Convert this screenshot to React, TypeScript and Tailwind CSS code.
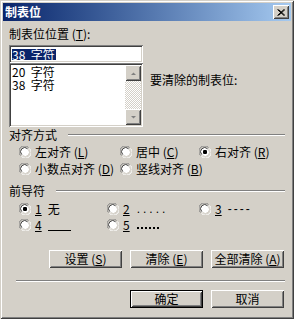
import React from "react";

const raised =
  "shadow-[inset_1px_1px_0_#ffffff,inset_-1px_-1px_0_#404040,inset_2px_2px_0_#d4d0c8,inset_-2px_-2px_0_#808080]";
const sunken =
  "shadow-[inset_1px_1px_0_#808080,inset_-1px_-1px_0_#ffffff,inset_2px_2px_0_#404040,inset_-2px_-2px_0_#d4d0c8]";

function Radio({ checked }: { checked?: boolean }) {
  return (
    <svg width="12" height="12" viewBox="0 0 12 12" className="shrink-0">
      <path d="M1.5 9.5 A5.5 5.5 0 0 1 9.5 1.5" stroke="#808080" strokeWidth="1" fill="none" />
      <path d="M2.5 10.5 A5.5 5.5 0 0 0 10.5 2.5" stroke="#ffffff" strokeWidth="1" fill="none" />
      <circle cx="6" cy="6" r="4.5" fill="#ffffff" />
      <path d="M2.8 8.6 A4 4 0 0 1 8.6 2.8" stroke="#404040" strokeWidth="1" fill="none" />
      <path d="M3.4 9.2 A4 4 0 0 0 9.2 3.4" stroke="#d4d0c8" strokeWidth="1" fill="none" />
      {checked && <rect x="4" y="4" width="4" height="4" rx="1.2" fill="#000" />}
    </svg>
  );
}

function RadioItem({ checked, children, w }: { checked?: boolean; children: React.ReactNode; w: string }) {
  return (
    <div className={`flex items-center h-[12px] ${w}`}>
      <Radio checked={checked} />
      <span className="ml-[4px] leading-[12px] whitespace-pre flex items-center">{children}</span>
    </div>
  );
}

function Btn({ children, def }: { children: React.ReactNode; def?: boolean }) {
  if (def) {
    return (
      <div className="w-[73px] h-[18px] border border-black">
        <div className={`w-full h-full flex items-center justify-center leading-[12px] whitespace-pre ${raised}`}>{children}</div>
      </div>
    );
  }
  return (
    <div className={`w-[73px] h-[18px] flex items-center justify-center leading-[12px] whitespace-pre ${raised}`}>{children}</div>
  );
}

function GroupHeader({ label }: { label: string }) {
  return (
    <div className="flex items-center h-[12px]">
      <span className="leading-[12px] whitespace-nowrap">{label}</span>
      <div className="flex-1 ml-[11px] border-t border-t-[#808080] border-b border-b-white" />
    </div>
  );
}

export default function App() {
  return (
    <div
      className="w-[294px] h-[319px] bg-[#d4d0c8] p-[3px] text-[12px] text-black font-['Noto_Sans_CJK_SC',sans-serif] shadow-[inset_1px_1px_0_#d4d0c8,inset_-1px_-1px_0_#404040,inset_2px_2px_0_#ffffff,inset_-2px_-2px_0_#808080] flex flex-col"
    >
      {/* Title bar */}
      <div className="h-[18px] flex items-center bg-gradient-to-r from-[#0a246a] to-[#a6caf0] pl-[2px] pr-[2px]">
        <span className="font-bold text-white leading-[12px]">制表位</span>
        <div className={`ml-auto w-[16px] h-[14px] bg-[#d4d0c8] flex items-center justify-center ${raised}`}>
          <svg width="8" height="7" viewBox="0 0 8 7">
            <path d="M0.5 0.5 L7 6.5 M1.5 0.5 L8 6.5 M7 0.5 L0.5 6.5 M8 0.5 L1.5 6.5" stroke="#000" strokeWidth="1" />
          </svg>
        </div>
      </div>

      <div className="flex flex-col px-[6px]">
        <div className="mt-[7px] h-[12px] leading-[12px] whitespace-pre">
          制表位位置 (<span className="underline">T</span>):
        </div>

        <div className="flex mt-[5px]">
          <div className="flex flex-col w-[134px]">
            <div className={`h-[18px] bg-white pl-[3px] flex items-center ${sunken}`}>
              <span className="bg-[#0a246a] text-white leading-[11px] h-[11px] pr-[1px] whitespace-pre">38  字符</span>
            </div>
            <div className={`h-[64px] bg-white p-[2px] flex ${sunken}`}>
              <div className="flex-1 flex flex-col pl-[1px] pt-[1px]">
                <div className="h-[12.5px] leading-[12px] whitespace-pre">20  字符</div>
                <div className="h-[12.5px] leading-[12px] whitespace-pre">38  字符</div>
              </div>
              <div className="w-[16px] flex flex-col bg-[repeating-conic-gradient(#d4d0c8_0%_25%,#ffffff_0%_50%)] bg-[length:2px_2px]">
                <div className={`h-[16px] bg-[#d4d0c8] flex items-center justify-center ${raised}`}>
                  <svg width="7" height="5" viewBox="0 0 7 5">
                    <path d="M1 4 L6 4 L3.5 1.5 Z" fill="#808080" />
                  </svg>
                </div>
                <div className="flex-1" />
                <div className={`h-[16px] bg-[#d4d0c8] flex items-center justify-center ${raised}`}>
                  <svg width="7" height="5" viewBox="0 0 7 5">
                    <path d="M1 1 L6 1 L3.5 3.5 Z" fill="#808080" />
                  </svg>
                </div>
              </div>
            </div>
          </div>
          <div className="ml-[7px] mt-[29px] h-[12px] leading-[12px] whitespace-nowrap">要清除的制表位:</div>
        </div>

        {/* Alignment */}
        <div className="mt-[2px]">
          <GroupHeader label="对齐方式" />
        </div>
        <div className="flex mt-[5px] ml-[10px]">
          <RadioItem w="w-[101px]">
            左对齐 (<span className="underline">L</span>)
          </RadioItem>
          <RadioItem w="w-[79px]">
            居中 (<span className="underline">C</span>)
          </RadioItem>
          <RadioItem checked w="">
            右对齐 (<span className="underline">R</span>)
          </RadioItem>
        </div>
        <div className="flex mt-[5px] ml-[10px]">
          <RadioItem w="w-[101px]">
            小数点对齐 (<span className="underline">D</span>)
          </RadioItem>
          <RadioItem w="">
            竖线对齐 (<span className="underline">B</span>)
          </RadioItem>
        </div>

        {/* Leader */}
        <div className="mt-[10px]">
          <GroupHeader label="前导符" />
        </div>
        <div className="flex mt-[6px] ml-[10px]">
          <RadioItem checked w="w-[88px]">
            <span className="underline">1</span>
            <span className="ml-[6px]">无</span>
          </RadioItem>
          <RadioItem w="w-[92px]">
            <span className="underline">2</span>
            <span className="ml-[7px] tracking-[3px] font-['Liberation_Sans',sans-serif]">.....</span>
          </RadioItem>
          <RadioItem w="">
            <span className="underline">3</span>
            <span className="ml-[6px] tracking-[2px] font-['Liberation_Sans',sans-serif]">----</span>
          </RadioItem>
        </div>
        <div className="flex mt-[4px] ml-[10px]">
          <RadioItem w="w-[88px]">
            <span className="underline">4</span>
            <span className="ml-[6px] w-[23px] h-[11px] border-b border-black" />
          </RadioItem>
          <RadioItem w="">
            <span className="underline">5</span>
            <span className="ml-[7px] flex gap-[2px] items-end h-[8px]">
              {[0, 1, 2, 3, 4, 5].map((i) => (
                <span key={i} className="w-[2px] h-[2px] bg-black" />
              ))}
            </span>
          </RadioItem>
        </div>

        {/* Buttons */}
        <div className="flex justify-end gap-[8px] mt-[19px] mr-[1px]">
          <Btn>
            设置 (<span className="underline">S</span>)
          </Btn>
          <Btn>
            清除 (<span className="underline">E</span>)
          </Btn>
          <Btn>
            全部清除 (<span className="underline">A</span>)
          </Btn>
        </div>

        <div className="mt-[12px] ml-[7px] border-t border-t-[#808080] border-b border-b-white" />

        <div className="flex justify-end gap-[8px] mt-[8px] mr-[1px]">
          <Btn def>确定</Btn>
          <Btn>取消</Btn>
        </div>
      </div>
    </div>
  );
}
